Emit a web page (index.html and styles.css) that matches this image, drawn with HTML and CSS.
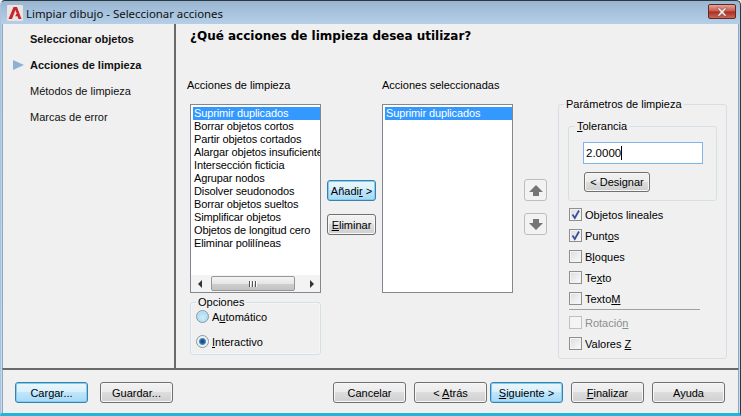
FILE: index.html
```html
<!DOCTYPE html>
<html lang="es">
<head>
<meta charset="utf-8">
<title>Limpiar dibujo - Seleccionar acciones</title>
<link rel="stylesheet" href="styles.css">
</head>
<body>
<div class="window">
  <header class="titlebar">
    <span class="app-icon"><svg width="16" height="16" viewBox="0 0 16 16"><rect width="16" height="16" rx="1" fill="#e9e3e1"/><path d="M1.500 14 6.500 2h3.500L14.500 14h-3l-1-2.800H8.200L9.300 9h.6L8.400 5 5 14Z" fill="#c8242b"/></svg></span>
    <span class="title-text">Limpiar dibujo - Seleccionar acciones</span>
    <button class="close"><svg width="16" height="10" viewBox="0 0 16 10"><path d="M3 1h2.500L8 3.500 10.500 1H13L9.500 5 13 9h-2.500L8 6.500 5.500 9H3l3.500-4Z" fill="#f4f4f4" stroke="#7d3a30" stroke-width=".5"/></svg></button>
  </header>
  <main class="main">
    <nav class="steps">
      <div class="step strong">Seleccionar objetos</div>
      <div class="step strong current">Acciones de limpieza</div>
      <div class="step">Métodos de limpieza</div>
      <div class="step">Marcas de error</div>
    </nav>
    <section class="content">
      <h1 class="heading">¿Qué acciones de limpieza desea utilizar?</h1>
      <div class="columns">
        <div class="col-avail">
          <label class="list-label">Acciones de limpieza</label>
          <div class="listbox with-scroll">
            <ul class="items">
              <li class="sel">Suprimir duplicados</li>
              <li>Borrar objetos cortos</li>
              <li>Partir objetos cortados</li>
              <li>Alargar objetos insuficientes</li>
              <li>Intersección ficticia</li>
              <li>Agrupar nodos</li>
              <li>Disolver seudonodos</li>
              <li>Borrar objetos sueltos</li>
              <li>Simplificar objetos</li>
              <li>Objetos de longitud cero</li>
              <li>Eliminar polilíneas</li>
            </ul>
            <div class="hscroll">
              <span class="arrow-left"></span>
              <span class="thumb"><i></i><i></i><i></i></span>
              <span class="arrow-right"></span>
            </div>
          </div>
          <fieldset class="group options">
            <legend>Opciones</legend>
            <div class="radio"><span class="radio-dot"></span><span>A<u>u</u>tomático</span></div>
            <div class="radio"><span class="radio-dot on"></span><span><u>I</u>nteractivo</span></div>
          </fieldset>
        </div>
        <div class="col-move">
          <button class="btn default">Añadi<u>r</u> &gt;</button>
          <button class="btn"><u>E</u>liminar</button>
        </div>
        <div class="col-selected">
          <label class="list-label">Acciones seleccionadas</label>
          <div class="listbox tall">
            <ul class="items">
              <li class="sel">Suprimir duplicados</li>
            </ul>
          </div>
        </div>
        <div class="col-order">
          <button class="order-btn"><svg width="16" height="13" viewBox="0 0 16 13"><path d="M8 1 15 8H11V12H5V8H1Z" fill="#757575"/></svg></button>
          <button class="order-btn"><svg width="16" height="13" viewBox="0 0 16 13"><path d="M8 12 15 5H11V1H5V5H1Z" fill="#757575"/></svg></button>
        </div>
        <fieldset class="group params">
          <legend>Parámetros de limpieza</legend>
          <fieldset class="group tolerance">
            <legend><u>T</u>olerancia</legend>
            <div class="input"><span>2.0000</span><span class="caret"></span></div>
            <button class="btn designar">&lt; Desi<u>g</u>nar</button>
          </fieldset>
          <div class="check on"><span class="box"><svg width="11" height="11" viewBox="0 0 11 11"><path d="M2.500 5.500 4.800 9 9 1.500" fill="none" stroke="#3b4f9a" stroke-width="1.800"/></svg></span><span>Objetos lineales</span></div>
          <div class="check on"><span class="box"><svg width="11" height="11" viewBox="0 0 11 11"><path d="M2.500 5.500 4.800 9 9 1.500" fill="none" stroke="#3b4f9a" stroke-width="1.800"/></svg></span><span>Punt<u>o</u>s</span></div>
          <div class="check"><span class="box"></span><span>B<u>l</u>oques</span></div>
          <div class="check"><span class="box"></span><span>Te<u>x</u>to</span></div>
          <div class="check"><span class="box"></span><span>Texto<u>M</u></span></div>
          <hr class="rule">
          <div class="check disabled"><span class="box"></span><span>Rotació<u>n</u></span></div>
          <div class="check"><span class="box"></span><span>Valores <u>Z</u></span></div>
        </fieldset>
      </div>
    </section>
  </main>
  <footer class="footer">
    <div class="footer-left">
      <button class="btn wide default">Cargar...</button>
      <button class="btn wide">Guardar...</button>
    </div>
    <div class="footer-right">
      <button class="btn wide">Cancelar</button>
      <div class="nav-pair">
        <button class="btn wide">&lt; <u>A</u>trás</button>
        <button class="btn wide default"><u>S</u>iguiente &gt;</button>
      </div>
      <button class="btn wide"><u>F</u>inalizar</button>
      <button class="btn wide">Ayuda</button>
    </div>
  </footer>
</div>
</body>
</html>
```
FILE: styles.css
```css
* { box-sizing: border-box; }
html, body { margin: 0; padding: 0; }
body {
  width: 741px;
  height: 416px;
  overflow: hidden;
  background: #f0f0f0;
  font-family: "Liberation Sans", Arial, sans-serif;
  font-size: 11px;
  color: #000;
}
.window {
  width: 741px;
  height: 416px;
  display: flex;
  flex-direction: column;
  background: linear-gradient(180deg, #9ab5d0 0, #b6d0e9 24px, #c4dcf0 100%);
  border: 1px solid #2b3a40;
  border-left-color: #a9c3dc;
  border-bottom: 3px solid #1fb6dc;
  border-radius: 5px 5px 0 0;
  padding: 0 1px;
}
.titlebar {
  height: 23px;
  flex: none;
  display: flex;
  align-items: center;
  padding: 1px 3px 0 5px;
}
.app-icon { width: 16px; height: 16px; display: block; margin-right: 3px; }
.app-icon svg { display: block; }
.title-text {
  font-family: "Noto Sans", sans-serif;
  font-size: 11.400px;
  color: #0c1014;
  flex: 1;
}
.close {
  width: 28px;
  height: 15px;
  margin-top: -3px;
  padding: 0;
  display: flex;
  align-items: center;
  justify-content: center;
  border: 1px solid #5d2a25;
  border-radius: 2px;
  background: linear-gradient(180deg, #e3a599 0, #c8574a 48%, #aa2c1e 52%, #c9685a 100%);
}
.close svg { display: block; }
.main {
  flex: 1;
  min-height: 0;
  display: flex;
  background: #f0f0f0;
  border-left: 1px solid #8fa8bf;
  border-right: 1px solid #8fa8bf;
}
.steps {
  width: 173px;
  flex: none;
  padding: 2px 0 0 27px;
  border-right: 2px solid #6a6a6a;
}
.step {
  height: 26px;
  display: flex;
  align-items: center;
  color: #111;
  position: relative;
}
.strong { font-weight: 700; }
.current::before {
  content: "";
  position: absolute;
  left: -17px;
  top: 8px;
  border-left: 11px solid #8fb0d6;
  border-top: 5.500px solid transparent;
  border-bottom: 5.500px solid transparent;
}
.content {
  flex: 1;
  min-width: 0;
  padding: 4px 11px 0 11px;
  display: flex;
  flex-direction: column;
}
.heading {
  margin: 0 0 0 3px;
  font-family: "DejaVu Sans", sans-serif;
  font-size: 12px;
  line-height: 16px;
  font-weight: 700;
  height: 49px;
}
.columns {
  display: flex;
  align-items: flex-start;
}
.list-label { display: block; height: 27px; padding-top: 1px; line-height: 15px; }
.col-avail { width: 140px; flex: none; }
.listbox {
  border: 1px solid #828790;
  background: #fff;
  width: 131px;
  height: 189px;
  display: flex;
  flex-direction: column;
  margin-left: 3px;
  overflow: hidden;
}
.items {
  list-style: none;
  margin: 0;
  padding: 2px 0 0 2px;
  flex: 1;
  min-height: 0;
  overflow: hidden;
  letter-spacing: -0.12px;
}
.items li {
  height: 13px;
  line-height: 13px;
  padding-left: 1px;
  white-space: nowrap;
}
.items li.sel { background: #3399ff; color: #fff; }
.hscroll {
  height: 17px;
  flex: none;
  background: #f3f3f3;
  display: flex;
  align-items: center;
}
.arrow-left, .arrow-right { width: 17px; display: flex; justify-content: center; flex: none; }
.arrow-right { margin-left: auto; }
.arrow-left::before {
  content: "";
  border-right: 4px solid #333;
  border-top: 4px solid transparent;
  border-bottom: 4px solid transparent;
}
.arrow-right::before {
  content: "";
  border-left: 4px solid #333;
  border-top: 4px solid transparent;
  border-bottom: 4px solid transparent;
}
.thumb {
  width: 84px;
  margin-left: 3px;
  height: 15px;
  border: 1px solid #979797;
  border-radius: 2px;
  background: linear-gradient(180deg, #f4f4f4 0, #e6e6e6 50%, #cfcfcf 51%, #c2c2c2 100%);
  display: flex;
  align-items: center;
  justify-content: center;
  gap: 1px;
}
.thumb i { width: 1px; height: 6px; background: #555; box-shadow: 1px 0 0 #fff; margin-right: 1px; }
.group {
  margin: 0;
  min-width: 0;
  border: 1px solid #d5dfe5;
  border-radius: 3px;
}
.group legend { padding: 0 2px; line-height: 13px; }
.options {
  width: 131px;
  height: 59px;
  margin: 3px 0 0 3px;
  padding: 1px 0 0 5px;
  box-shadow: inset 0 0 0 1px #f4f7f9;
}
.options > legend { margin-left: 0; }
.radio {
  display: flex;
  align-items: center;
  gap: 3px;
  height: 13px;
  margin: 0 0 12px;
}
.radio-dot {
  width: 13px;
  height: 13px;
  border-radius: 50%;
  border: 1px solid #8a97a5;
  background: radial-gradient(circle at 50% 60%, #cfeeff 0, #b2dcf2 60%, #e7eff5 100%);
  flex: none;
}
.radio-dot.on {
  background: radial-gradient(circle, #12386b 0, #2f6ea8 30%, #5d9dc8 42%, #f0f3f6 50%, #e8edf2 100%);
}
.col-move {
  width: 55px;
  flex: none;
  padding-top: 103px;
  display: flex;
  flex-direction: column;
  gap: 13px;
}
.col-selected { width: 142px; flex: none; }
.col-selected .listbox { margin-left: 0; }
.col-order {
  width: 34px;
  flex: none;
  padding-top: 102px;
  display: flex;
  flex-direction: column;
  gap: 12px;
}
.order-btn {
  width: 23px;
  height: 22px;
  padding: 0;
  border: 1px solid #bdbdbd;
  border-radius: 3px;
  background: #f2f2f2;
  display: flex;
  align-items: center;
  justify-content: center;
}
.btn {
  font: inherit;
  color: #000;
  display: block;
  width: 49px;
  height: 21px;
  padding: 0;
  text-align: center;
  border: 1px solid #707070;
  border-radius: 3px;
  background: linear-gradient(180deg, #f2f2f2 0, #ebebeb 48%, #dddddd 50%, #cfcfcf 100%);
  box-shadow: inset 0 0 0 1px #f7f7f7;
}
.btn.default {
  border-color: #3c7fb1;
  background: linear-gradient(180deg, #eaf6fd 0, #d9f0fc 48%, #bee6fd 50%, #a7d9f5 100%);
  box-shadow: inset 0 0 0 1px #7fd0ee;
}
.params {
  width: 169px;
  height: 261px;
  margin-top: 21px;
  padding: 0 0 0 9px;
}
.params > legend { margin-left: -4px; }
.tolerance {
  width: 149px;
  height: 81px;
  margin-top: 9px;
  padding: 9px 0 0 14px;
}
.tolerance > legend { margin-left: -8px; }
.input {
  width: 120px;
  height: 22px;
  border: 1px solid #7eb4ea;
  background: #fff;
  display: flex;
  align-items: center;
  padding-left: 2px;
  font-size: 11.500px;
}
.caret { width: 1px; height: 14px; background: #000; }
.designar { width: 66px; margin: 8px 0 0 1px; height: 20px; }
.check {
  display: flex;
  align-items: center;
  gap: 3px;
  height: 13px;
  margin-top: 8px;
  padding-left: 1px;
}
.tolerance + .check { margin-top: 7px; }
.box {
  width: 13px;
  height: 13px;
  border: 1px solid #8e8f8f;
  background: linear-gradient(135deg, #dcdcdc, #fbfbfb);
  box-shadow: inset 0 0 0 1px #f3f3f3;
  flex: none;
  display: flex;
  align-items: center;
  justify-content: center;
}
.box svg { display: block; }
.rule {
  width: 131px;
  height: 1px;
  border: 0;
  background: #a0a0a0;
  margin: 4px 0 0 1px;
}
.rule + .check { margin-top: 6px; }
.check.disabled { color: #8d8d8d; }
.check.disabled .box { border-color: #c0c0c0; background: #f4f4f4; box-shadow: none; }
.footer {
  height: 45px;
  flex: none;
  background: #f0f0f0;
  border-top: 2px solid #6a6a6a;
  border-left: 1px solid #8fa8bf;
  border-right: 1px solid #8fa8bf;
  display: flex;
  justify-content: space-between;
  padding: 12px 13px 0 12px;
}
.footer-left, .footer-right, .nav-pair { display: flex; align-items: flex-start; }
.footer-left { gap: 12px; }
.footer-right { gap: 8px; }
.nav-pair { gap: 3px; }
.btn.wide { width: 73px; }
```
